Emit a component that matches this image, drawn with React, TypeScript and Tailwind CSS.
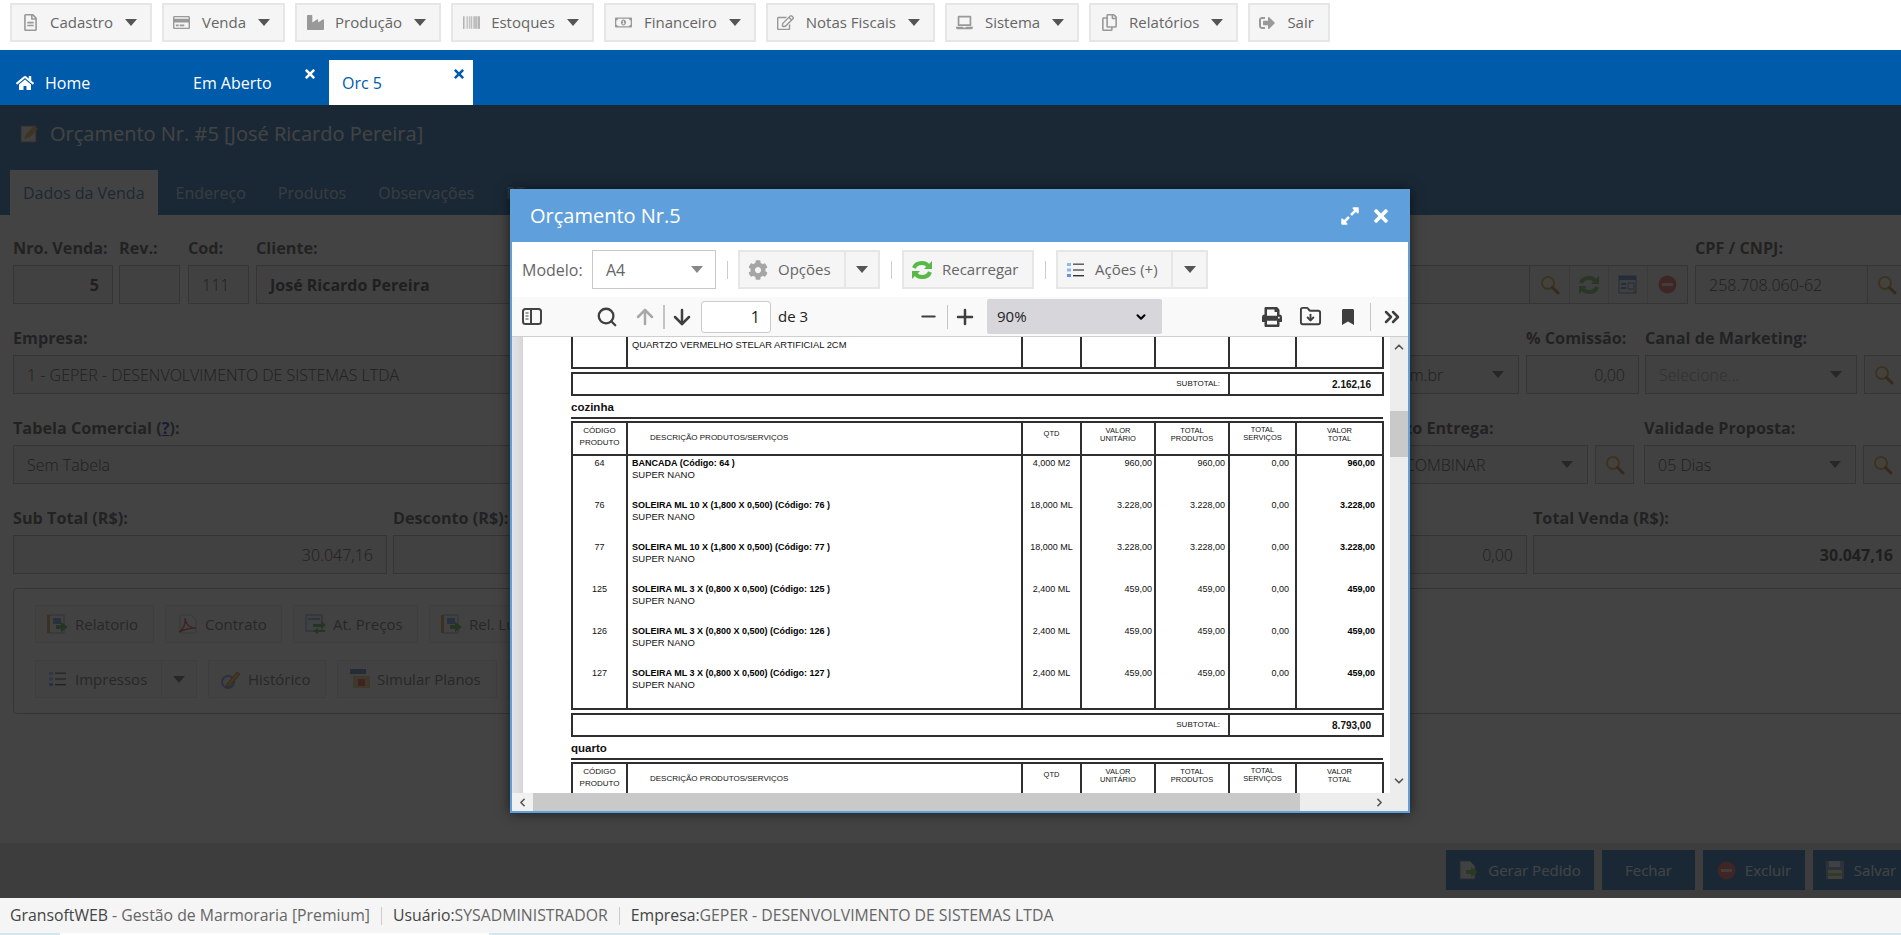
import {
  ArrowDown,
  ArrowUp,
  ChevronDown,
  ChevronLeft,
  ChevronRight,
  ChevronUp,
  ChevronsRight,
  FolderDown,
  Minus,
  Plus,
  Search,
} from "lucide-react";
import {
  FaBarcode,
  FaBookmark,
  FaCog,
  FaExpandAlt,
  FaHome,
  FaIndustry,
  FaLaptop,
  FaPrint,
  FaRegCopy,
  FaRegCreditCard,
  FaRegEdit,
  FaRegFileAlt,
  FaRegMoneyBillAlt,
  FaSignOutAlt,
  FaTimes,
} from "react-icons/fa";

type IconType = React.ElementType;

function Caret({ className = "text-[#555]" }: { className?: string }) {
  return (
    <svg width="12" height="7" viewBox="0 0 12 7" className={"shrink-0 " + className}>
      <path d="M0 0h12L6 7z" fill="currentColor" />
    </svg>
  );
}

/* old colour icons of the app */
function IconSearchOld() {
  return (
    <svg width="20" height="20" viewBox="0 0 20 20">
      <circle cx="8" cy="8" r="6" fill="#fff6d8" stroke="#d9962c" strokeWidth="2" />
      <path d="M12.5 12.5L18 18" stroke="#a8641c" strokeWidth="3" strokeLinecap="round" />
    </svg>
  );
}

function IconRefresh() {
  return (
    <svg width="22" height="20" viewBox="0 0 22 20" fill="none" stroke="#58b947" strokeWidth="4">
      <path d="M3 8c1-3 4-5 8-5 3 0 5 1 6 3" />
      <path d="M13 9l8 0 0-8z" fill="#58b947" stroke="none" />
      <path d="M19 12c-1 3-4 5-8 5-3 0-5-1-6-3" />
      <path d="M9 11l-8 0 0 8z" fill="#58b947" stroke="none" />
    </svg>
  );
}

function IconList() {
  return (
    <svg width="17" height="16" viewBox="0 0 17 16">
      <rect x="0" y="1" width="4" height="3" fill="#8cb8ee" />
      <rect x="0" y="6.5" width="4" height="3" fill="#8cb8ee" />
      <rect x="0" y="12" width="4" height="3" fill="#5f95e0" />
      <rect x="6" y="1.5" width="11" height="1.4" fill="#555" />
      <rect x="6" y="7.3" width="11" height="1.4" fill="#555" />
      <rect x="6" y="13" width="11" height="1.4" fill="#333" />
    </svg>
  );
}

function IconDocArrow() {
  return (
    <svg width="21" height="20" viewBox="0 0 21 20">
      <rect x="2" y="1" width="15" height="18" fill="#f4f4f4" stroke="#8a9bb0" />
      <rect x="0" y="1" width="3" height="18" fill="#d98a3c" />
      <rect x="6" y="4" width="8" height="6" fill="#5c8fd0" />
      <path d="M9 11h5V8l7 5-7 5v-3H9z" fill="#46a83a" />
    </svg>
  );
}

function IconPdf() {
  return (
    <svg width="20" height="20" viewBox="0 0 20 20" fill="none">
      <path d="M2 1h11l5 5v13H2z" fill="#fafafa" stroke="#bbb" />
      <path
        d="M1 18c4-2 7-8 6-14 0 5 4 10 11 10-5 0-11 1-17 4z"
        stroke="#e23b2e"
        strokeWidth="1.4"
      />
    </svg>
  );
}

function IconPrices() {
  return (
    <svg width="21" height="20" viewBox="0 0 21 20">
      <rect x="1" y="1" width="16" height="16" fill="#e6eefa" stroke="#5c7fbf" />
      <rect x="3" y="4" width="12" height="2" fill="#7fa3da" />
      <path d="M8 10h8V7l5 4-5 4v-2H8z" fill="#46a83a" />
      <path d="M20 16h-7v-2l-5 3 5 3v-2h7z" fill="#46a83a" />
    </svg>
  );
}

function IconPencil() {
  return (
    <svg width="21" height="21" viewBox="0 0 21 21" fill="none">
      <circle cx="8" cy="13" r="6" stroke="#5f95e0" strokeWidth="2" />
      <path d="M7 15L17 3l3 2-10 12-4 1z" fill="#eeb53c" stroke="#a86f1c" />
    </svg>
  );
}

function IconPlans() {
  return (
    <svg width="20" height="20" viewBox="0 0 20 20">
      <rect x="0" y="0" width="16" height="5" fill="#3f6fb0" />
      <rect x="0" y="5" width="16" height="6" fill="#f1f1f1" />
      <rect x="3" y="7" width="17" height="12" fill="#e9c36a" />
      <rect x="8" y="10" width="7" height="7" fill="#e23b2e" />
    </svg>
  );
}

function IconNoEntry() {
  return (
    <svg width="19" height="19" viewBox="0 0 19 19">
      <circle cx="9.5" cy="9.5" r="9" fill="#e2473a" />
      <rect x="4" y="8" width="11" height="3" fill="#f6d6d2" />
    </svg>
  );
}

function IconForm() {
  return (
    <svg width="20" height="20" viewBox="0 0 20 20">
      <rect x="1" y="1" width="17" height="17" fill="#dce8f8" stroke="#4a76b8" />
      <rect x="1" y="1" width="17" height="4" fill="#4a76b8" />
      <rect x="3" y="8" width="5" height="2" fill="#4a76b8" />
      <rect x="3" y="12" width="5" height="2" fill="#4a76b8" />
      <rect x="10" y="8" width="6" height="6" fill="none" stroke="#4a76b8" />
      <circle cx="17" cy="17" r="2" fill="#d9962c" />
    </svg>
  );
}

function IconGerar() {
  return (
    <svg width="20" height="20" viewBox="0 0 20 20">
      <path d="M1 1h10l5 5v13H1z" fill="#f2f2f2" stroke="#4a76b8" />
      <path d="M7 10h5V7l7 5-7 5v-3H7z" fill="#58c43e" />
    </svg>
  );
}

function IconFloppy() {
  return (
    <svg width="20" height="20" viewBox="0 0 20 20">
      <rect x="0.5" y="0.5" width="19" height="19" rx="1" fill="#6f8fd0" stroke="#2b4f9c" />
      <rect x="4" y="1" width="11" height="6" fill="#e8eef8" />
      <rect x="3" y="10" width="14" height="9" fill="#f1f5d0" />
      <rect x="3" y="13" width="14" height="3" fill="#9cc45c" />
    </svg>
  );
}

function IconEditOld() {
  return (
    <svg width="20" height="20" viewBox="0 0 20 20">
      <rect x="1" y="2" width="15" height="16" fill="#eee" stroke="#777" />
      <path d="M4 15l2-5 8-8 4 3-8 8z" fill="#e0a030" />
    </svg>
  );
}

/* top menu */
const menu: { label: string; icon: IconType }[] = [
  { label: "Cadastro", icon: FaRegFileAlt },
  { label: "Venda", icon: FaRegCreditCard },
  { label: "Produção", icon: FaIndustry },
  { label: "Estoques", icon: FaBarcode },
  { label: "Financeiro", icon: FaRegMoneyBillAlt },
  { label: "Notas Fiscais", icon: FaRegEdit },
  { label: "Sistema", icon: FaLaptop },
  { label: "Relatórios", icon: FaRegCopy },
];

function MenuButton({ label, icon: Icon }: { label: string; icon: IconType }) {
  return (
    <button className="flex h-[39px] items-center border-2 border-[#e6e6e6] bg-[#f5f5f5] pl-[9px] pr-[13px] text-[15px] text-[#666]">
      <span className="mr-[11px] flex w-[18px] justify-center text-[#999]">
        <Icon size={17} />
      </span>
      {label}
      <Caret className="ml-[12px] text-[#555]" />
    </button>
  );
}

/* behind the modal */
function Label({ children }: { children: React.ReactNode }) {
  return <div className="mb-[7px] h-[20px] whitespace-nowrap text-[16.2px] font-bold leading-[21px] text-[#333]">{children}</div>;
}

function Input({
  children,
  className = "",
}: {
  children?: React.ReactNode;
  className?: string;
}) {
  return (
    <div className={"flex h-[39px] items-center whitespace-nowrap border border-[#aaa] bg-[#eee] px-[13px] text-[16px] font-light text-[#222] " + className}>
      {children}
    </div>
  );
}

function SelectBox({ children, className = "" }: { children?: React.ReactNode; className?: string }) {
  return (
    <Input className={"justify-between " + className}>
      <span>{children}</span>
      <Caret className="mr-[1px] text-[#555]" />
    </Input>
  );
}

function LookupBtn() {
  return (
    <div className="flex h-[39px] w-[39px] shrink-0 items-center justify-center border border-[#aaa] bg-[#eee]">
      <IconSearchOld />
    </div>
  );
}

function ActionBtn({
  icon,
  label,
  className = "",
  split,
}: {
  icon: React.ReactNode;
  label: string;
  className?: string;
  split?: boolean;
}) {
  return (
    <div className={"flex h-[38px] shrink-0 items-center border border-[#ddd] bg-[#f5f5f5] text-[15px] text-[#555] " + className}>
      <span className="ml-[11px] mr-[7px] flex w-[21px] justify-center">{icon}</span>
      <span className="whitespace-nowrap">{label}</span>
      {split && (
        <span className="ml-auto flex h-full w-[35px] items-center justify-center border-l border-[#ddd]">
          <Caret />
        </span>
      )}
    </div>
  );
}

function BlueBtn({ children, className = "" }: { children: React.ReactNode; className?: string }) {
  return (
    <div className={"flex h-[40px] shrink-0 items-center justify-center gap-[9px] bg-[#005bab] text-[15px] text-white " + className}>
      {children}
    </div>
  );
}

/* pdf */
const pdfCols = "grid grid-cols-[53px_395px_59px_74px_74px_67px_87px]";

type PdfRow = {
  code: string;
  title: string;
  qty: string;
  unit: string;
  prod: string;
  serv: string;
  total: string;
};

const cozinha: PdfRow[] = [
  { code: "64", title: "BANCADA (Código: 64 )", qty: "4,000 M2", unit: "960,00", prod: "960,00", serv: "0,00", total: "960,00" },
  { code: "76", title: "SOLEIRA ML 10 X (1,800 X 0,500) (Código: 76 )", qty: "18,000 ML", unit: "3.228,00", prod: "3.228,00", serv: "0,00", total: "3.228,00" },
  { code: "77", title: "SOLEIRA ML 10 X (1,800 X 0,500) (Código: 77 )", qty: "18,000 ML", unit: "3.228,00", prod: "3.228,00", serv: "0,00", total: "3.228,00" },
  { code: "125", title: "SOLEIRA ML 3 X (0,800 X 0,500) (Código: 125 )", qty: "2,400 ML", unit: "459,00", prod: "459,00", serv: "0,00", total: "459,00" },
  { code: "126", title: "SOLEIRA ML 3 X (0,800 X 0,500) (Código: 126 )", qty: "2,400 ML", unit: "459,00", prod: "459,00", serv: "0,00", total: "459,00" },
  { code: "127", title: "SOLEIRA ML 3 X (0,800 X 0,500) (Código: 127 )", qty: "2,400 ML", unit: "459,00", prod: "459,00", serv: "0,00", total: "459,00" },
];

function PdfHeader() {
  const small = "flex flex-col items-center border-l-2 border-[#2f2f2f] pt-[4px] text-[7.5px] leading-[8px]";
  return (
    <div className={pdfCols + " h-[31px] text-[#111]"}>
      <div className="flex flex-col items-center pt-[2px] text-[8px] leading-[12px]">
        <span>CÓDIGO</span>
        <span>PRODUTO</span>
      </div>
      <div className="border-l-2 border-[#2f2f2f] pl-[22px] pt-[10px] text-[8px] leading-[10px]">DESCRIÇÃO PRODUTOS/SERVIÇOS</div>
      <div className="flex justify-center border-l-2 border-[#2f2f2f] pt-[7px] text-[7.5px] leading-[8px]">QTD</div>
      <div className={small}>
        <span>VALOR</span>
        <span>UNITÁRIO</span>
      </div>
      <div className={small}>
        <span>TOTAL</span>
        <span>PRODUTOS</span>
      </div>
      <div className={small + " !pt-[3px]"}>
        <span>TOTAL</span>
        <span>SERVIÇOS</span>
      </div>
      <div className={small}>
        <span>VALOR</span>
        <span>TOTAL</span>
      </div>
    </div>
  );
}

function PdfItem({ row }: { row: PdfRow }) {
  const cell = "border-l-2 border-[#2f2f2f] pt-[1px]";
  return (
    <div className={pdfCols + " h-[42px] text-[9px] leading-[12px] text-[#111]"}>
      <div className="pt-[1px] text-center">{row.code}</div>
      <div className={cell + " pl-[1px]"}>
        <div className="pl-[3px] font-bold text-black">{row.title}</div>
        <div className="pl-[3px] text-[9.5px]">SUPER NANO</div>
      </div>
      <div className={cell + " text-center"}>{row.qty}</div>
      <div className={cell + " pr-[2px] text-right"}>{row.unit}</div>
      <div className={cell + " pr-[3px] text-right"}>{row.prod}</div>
      <div className={cell + " pr-[6px] text-right"}>{row.serv}</div>
      <div className={cell + " pr-[7px] text-right font-bold text-black"}>{row.total}</div>
    </div>
  );
}

function Subtotal({ value }: { value: string }) {
  return (
    <div className="mt-[3px] flex h-[24px] w-[813px] border-2 border-[#2f2f2f]">
      <div className="flex w-[655px] items-center justify-end pr-[8px] text-[8px] text-[#111]">SUBTOTAL:</div>
      <div className="flex flex-1 items-center justify-end border-l-2 border-[#2f2f2f] pr-[11px] text-[10px] font-bold text-[#111]">{value}</div>
    </div>
  );
}

function SectionTitle({ children }: { children: string }) {
  return (
    <>
      <div className="h-[21px] pt-[4px] text-[11.5px] font-bold leading-[14px] text-[#111]">{children}</div>
      <div className="h-[2px] w-[812px] bg-[#2f2f2f]" />
    </>
  );
}

function PdfPage() {
  return (
    <div className="ml-[48px] w-[813px] font-['Liberation_Sans',Arial,sans-serif]">
      {/* end of the previous group */}
      <div className={pdfCols + " h-[32px] w-[813px] border-x-2 border-b-2 border-[#2f2f2f]"}>
        <div />
        <div className="border-l-2 border-[#2f2f2f] pl-[4px] pt-[2px] text-[9.4px] leading-[12px] text-[#111]">QUARTZO VERMELHO STELAR ARTIFICIAL 2CM</div>
        <div className="border-l-2 border-[#2f2f2f]" />
        <div className="border-l-2 border-[#2f2f2f]" />
        <div className="border-l-2 border-[#2f2f2f]" />
        <div className="border-l-2 border-[#2f2f2f]" />
        <div className="border-l-2 border-[#2f2f2f]" />
      </div>
      <Subtotal value="2.162,16" />
      <SectionTitle>cozinha</SectionTitle>

      <div className="mt-[2px] w-[813px] border-2 border-[#2f2f2f]">
        <PdfHeader />
        <div className="h-[2px] bg-[#2f2f2f]" />
        {cozinha.map((row) => (
          <PdfItem key={row.code} row={row} />
        ))}
      </div>
      <Subtotal value="8.793,00" />
      <SectionTitle>quarto</SectionTitle>

      <div className="mt-[2px] w-[813px] border-2 border-[#2f2f2f]">
        <PdfHeader />
      </div>
    </div>
  );
}

function ToolSep() {
  return <div className="ml-[11px] mr-[10px] h-[18px] w-px bg-[#ccc]" />;
}

function PdfViewer() {
  return (
    <div className="flex min-h-0 flex-1">
      <div className="flex min-w-0 flex-1 flex-col">
        <div className="flex min-h-0 flex-1 overflow-hidden bg-white">
          <div className="w-[11px] shrink-0 bg-gradient-to-r from-[#e4e4e6] to-[#d6d6d8]" />
          <PdfPage />
        </div>
        <div className="flex h-[18px] shrink-0 items-center bg-[#ededed] text-[#555]">
          <span className="flex h-full w-[21px] items-center justify-center bg-[#f1f1f1]">
            <ChevronLeft size={13} strokeWidth={3} />
          </span>
          <div className="h-full w-[767px] bg-[#c9c9c9]" />
          <span className="ml-auto flex h-full w-[21px] items-center justify-center">
            <ChevronRight size={13} strokeWidth={3} />
          </span>
        </div>
      </div>
      <div className="flex w-[18px] shrink-0 flex-col bg-[#ededed] text-[#555]">
        <span className="flex h-[20px] items-center justify-center">
          <ChevronUp size={14} strokeWidth={3} />
        </span>
        <div className="mt-[54px] h-[46px] bg-[#c9c9c9]" />
        <span className="mt-[314px] flex h-[20px] items-center justify-center">
          <ChevronDown size={14} strokeWidth={3} />
        </span>
      </div>
    </div>
  );
}

function Modal() {
  return (
    <div className="absolute left-[510px] top-[84px] flex h-[624px] w-[900px] flex-col border-x-2 border-b-2 border-[#5fa0dc] bg-white shadow-[0_0_12px_rgba(0,0,0,0.6)]">
      <div className="-mx-[2px] flex h-[53px] shrink-0 items-center bg-[#5fa0dc] pl-[20px] pr-[19px] pt-[1px] text-white">
        <span className="text-[20px]">Orçamento Nr.5</span>
        <FaExpandAlt size={20} className="ml-auto" />
        <FaTimes size={20} className="ml-[11px]" />
      </div>

      <div className="flex h-[55px] shrink-0 items-center pl-[10px] text-[15px] text-[#666]">
        <span className="w-[70px] text-[16px]">Modelo:</span>
        <div className="flex h-[39px] w-[124px] items-center justify-between border border-[#c8c8c8] pl-[13px] pr-[12px] text-[16px]">
          A4
          <Caret className="text-[#888]" />
        </div>
        <ToolSep />
        <div className="flex h-[39px] w-[142px] items-center border-2 border-[#e6e6e6] bg-[#f5f5f5]">
          <FaCog size={20} className="ml-[8px] text-[#a5a5a5]" />
          <span className="ml-[10px]">Opções</span>
          <span className="ml-auto flex h-full w-[34px] items-center justify-center border-l-2 border-[#e6e6e6]">
            <Caret />
          </span>
        </div>
        <ToolSep />
        <div className="flex h-[39px] w-[132px] items-center border-2 border-[#e6e6e6] bg-[#f5f5f5]">
          <span className="ml-[7px]">
            <IconRefresh />
          </span>
          <span className="ml-[9px]">Recarregar</span>
        </div>
        <ToolSep />
        <div className="flex h-[39px] w-[152px] items-center border-2 border-[#e6e6e6] bg-[#f5f5f5]">
          <span className="ml-[9px]">
            <IconList />
          </span>
          <span className="ml-[11px]">Ações (+)</span>
          <span className="ml-auto flex h-full w-[35px] items-center justify-center border-l-2 border-[#e6e6e6]">
            <Caret />
          </span>
        </div>
      </div>

      {/* pdf.js toolbar */}
      <div className="flex h-[40px] shrink-0 items-center border-b border-[#cfcfcf] bg-[#f9f9fa] text-[#3f3f3f]">
        <svg width="20" height="17" viewBox="0 0 20 17" fill="none" className="ml-[10px] shrink-0">
          <rect x="1" y="1" width="18" height="15" rx="2.5" stroke="#444" strokeWidth="2" />
          <path d="M9 1v15" stroke="#444" strokeWidth="2" />
          <path d="M3.5 5h3M3.5 8h3M3.5 11h3" stroke="#444" />
        </svg>
        <Search size={22} strokeWidth={2.5} className="ml-[54px] shrink-0" />
        <ArrowUp size={24} strokeWidth={2.5} className="ml-[15px] shrink-0 text-[#a8a8a8]" />
        <div className="ml-[6px] h-[24px] w-[2px] bg-[#c4c4c4]" />
        <ArrowDown size={24} strokeWidth={2.5} className="ml-[5px] shrink-0" />
        <div className="ml-[7px] flex h-[32px] w-[70px] shrink-0 items-center justify-end rounded-[3px] border border-[#ccc] bg-white pr-[10px] text-[16px] text-[#222]">
          1
        </div>
        <span className="ml-[7px] w-[30px] shrink-0 whitespace-nowrap text-[15px] text-[#222]">de 3</span>
        <Minus size={21} strokeWidth={2.5} className="ml-[110px] shrink-0" />
        <div className="ml-[8px] h-[24px] w-px bg-[#c4c4c4]" />
        <Plus size={24} strokeWidth={2.5} className="ml-[5px] shrink-0" />
        <div className="ml-[10px] flex h-[35px] w-[175px] shrink-0 items-center justify-between rounded-[2px] bg-[#d7d7db] pl-[10px] pr-[14px] text-[15px] text-[#222]">
          90%
          <ChevronDown size={14} strokeWidth={3.5} className="text-black" />
        </div>
        <FaPrint size={20} className="ml-[100px] shrink-0" />
        <FolderDown size={23} strokeWidth={2} className="ml-[17px] shrink-0" />
        <FaBookmark size={16} className="ml-[18px] shrink-0" />
        <div className="ml-[14px] h-[28px] w-px bg-[#c4c4c4]" />
        <ChevronsRight size={24} strokeWidth={2.5} className="ml-[9px] shrink-0" />
      </div>

      <PdfViewer />
    </div>
  );
}

export default function App() {
  return (
    <div className="flex h-[935px] w-full flex-col overflow-hidden bg-white font-['Open_Sans',sans-serif]">
      {/* Menu */}
      <div className="flex h-[50px] shrink-0 gap-[10px] pl-[10px] pt-[3px]">
        {menu.map((m) => (
          <MenuButton key={m.label} label={m.label} icon={m.icon} />
        ))}
        <button className="flex h-[39px] items-center border-2 border-[#e6e6e6] bg-[#f5f5f5] pl-[9px] pr-[14px] text-[15px] text-[#666]">
          <FaSignOutAlt size={16} className="mr-[12px] text-[#999]" />
          Sair
        </button>
      </div>

      {/* Tabs */}
      <div className="flex h-[55px] shrink-0 items-end bg-[#005bab] text-[16px]">
        <div className="flex h-[45px] w-[180px] items-center pl-[16px] text-white">
          <FaHome size={18} className="mr-[11px]" />
          Home
        </div>
        <div className="relative flex h-[45px] w-[149px] items-center pl-[13px] text-white">
          Em Aberto
          <FaTimes size={14} className="absolute right-[12px] top-[7px]" />
        </div>
        <div className="relative flex h-[45px] w-[144px] items-center bg-white pl-[13px] text-[#005bab]">
          Orc 5
          <FaTimes size={14} className="absolute right-[7px] top-[7px]" />
        </div>
      </div>

      {/* Page under the modal */}
      <div className="relative flex min-h-0 flex-1 flex-col overflow-hidden bg-white">
        <div className="flex h-[110px] shrink-0 flex-col bg-[#005bab]">
          <div className="flex h-[56px] items-center pl-[20px] pt-[1px] text-[20px] text-white">
            <span className="mr-[10px]">
              <IconEditOld />
            </span>
            Orçamento Nr. #5 [José Ricardo Pereira]
          </div>
          <div className="ml-[10px] mt-[9px] flex h-[45px] items-center gap-[32px] text-[16px] text-[#c3d2e0]">
            <div className="flex h-full items-center bg-white px-[13px] text-[#005bab]">Dados da Venda</div>
            <span className="-ml-[14px]">Endereço</span>
            <span>Produtos</span>
            <span>Observações</span>
            <span>RT</span>
          </div>
        </div>

        <div className="flex w-[1907px] flex-1 flex-col pl-[13px] pt-[23px]">
          {/* Row 1 */}
          <div className="flex">
            <div className="mr-[6px] w-[100px]">
              <Label>Nro. Venda:</Label>
              <Input className="justify-end !font-bold">5</Input>
            </div>
            <div className="mr-[8px] w-[61px]">
              <Label>Rev.:</Label>
              <Input />
            </div>
            <div className="mr-[7px] w-[61px]">
              <Label>Cod:</Label>
              <Input>111</Input>
            </div>
            <div className="mr-[7px] w-[1432px]">
              <Label>Cliente:</Label>
              <div className="flex h-[39px] items-center border border-[#aaa] bg-[#eee]">
                <span className="flex-1 pl-[13px] text-[16px] font-bold text-[#222]">José Ricardo Pereira</span>
                <span className="flex h-full w-[40px] items-center justify-center border-l border-[#aaa]">
                  <IconSearchOld />
                </span>
                <span className="flex h-full w-[39px] items-center justify-center border-l border-[#ccc]">
                  <IconRefresh />
                </span>
                <span className="flex h-full w-[39px] items-center justify-center border-l border-[#ccc]">
                  <IconForm />
                </span>
                <span className="flex h-full w-[40px] items-center justify-center border-l border-[#ccc]">
                  <IconNoEntry />
                </span>
              </div>
            </div>
            <div className="w-[212px]">
              <Label>CPF / CNPJ:</Label>
              <div className="flex h-[39px] items-center border border-[#aaa] bg-[#eee] text-[16px] font-light text-[#222]">
                <span className="flex-1 pl-[13px]">258.708.060-62</span>
                <span className="flex h-full w-[39px] items-center justify-center border-l border-[#aaa]">
                  <IconSearchOld />
                </span>
              </div>
            </div>
          </div>

          {/* Row 2 */}
          <div className="mt-[24px] flex">
            <div className="mr-[7px] w-[1230px]">
              <Label>Empresa:</Label>
              <Input>1 - GEPER - DESENVOLVIMENTO DE SISTEMAS LTDA</Input>
            </div>
            <div className="mr-[7px] w-[269px]">
              <Label>Vendedor:</Label>
              <SelectBox>vendas@gransoft.com.br</SelectBox>
            </div>
            <div className="mr-[6px] w-[113px]">
              <Label>% Comissão:</Label>
              <Input className="justify-end">0,00</Input>
            </div>
            <div className="mr-[7px] w-[212px]">
              <Label>Canal de Marketing:</Label>
              <SelectBox className="!text-[#888]">Selecione...</SelectBox>
            </div>
            <div className="pt-[27px]">
              <LookupBtn />
            </div>
          </div>

          {/* Row 3 */}
          <div className="mt-[24px] flex">
            <div className="mr-[7px] w-[1357px]">
              <Label>
                Tabela Comercial (<span className="text-[#0000c8] underline">?</span>):
              </Label>
              <Input>Sem Tabela</Input>
            </div>
            <div className="mr-[7px] w-[211px]">
              <Label>Prazo Entrega:</Label>
              <SelectBox>A COMBINAR</SelectBox>
            </div>
            <div className="mr-[10px] pt-[27px]">
              <LookupBtn />
            </div>
            <div className="mr-[7px] w-[212px]">
              <Label>Validade Proposta:</Label>
              <SelectBox>05 Dias</SelectBox>
            </div>
            <div className="pt-[27px]">
              <LookupBtn />
            </div>
          </div>

          {/* Row 4 */}
          <div className="mt-[24px] flex gap-[6px]">
            <div className="flex-1">
              <Label>Sub Total (R$):</Label>
              <Input className="justify-end">30.047,16</Input>
            </div>
            <div className="flex-1">
              <Label>Desconto (R$):</Label>
              <Input className="justify-end">0,00</Input>
            </div>
            <div className="flex-1">
              <Label>Frete (R$):</Label>
              <Input className="justify-end">0,00</Input>
            </div>
            <div className="flex-1">
              <Label>Outros (R$):</Label>
              <Input className="justify-end">0,00</Input>
            </div>
            <div className="flex-1">
              <Label>Total Venda (R$):</Label>
              <Input className="justify-end !font-bold">30.047,16</Input>
            </div>
          </div>

          {/* Buttons */}
          <div className="mt-[14px] h-[126px] rounded-[4px] border border-[#aaa] pl-[21px] pt-[16px]">
            <div className="flex gap-[11px]">
              <ActionBtn icon={<IconDocArrow />} label="Relatorio" className="w-[119px]" />
              <ActionBtn icon={<IconPdf />} label="Contrato" className="w-[117px]" />
              <ActionBtn icon={<IconPrices />} label="At. Preços" className="w-[125px]" />
              <ActionBtn icon={<IconDocArrow />} label="Rel. Lucro" className="w-[125px]" />
            </div>
            <div className="mt-[17px] flex gap-[11px]">
              <ActionBtn icon={<IconList />} label="Impressos" className="w-[162px]" split />
              <ActionBtn icon={<IconPencil />} label="Histórico" className="w-[118px]" />
              <ActionBtn icon={<IconPlans />} label="Simular Planos" className="w-[160px]" />
              <ActionBtn icon={<IconDocArrow />} label="Anexos" className="w-[110px]" />
            </div>
          </div>
        </div>

        {/* Action bar */}
        <div className="flex h-[55px] w-[1940px] shrink-0 items-start gap-[8px] bg-[#dadada] pl-[1446px] pt-[7px]">
          <BlueBtn className="w-[148px]">
            <IconGerar />
            Gerar Pedido
          </BlueBtn>
          <BlueBtn className="w-[93px]">Fechar</BlueBtn>
          <BlueBtn className="w-[102px]">
            <IconNoEntry />
            Excluir
          </BlueBtn>
          <BlueBtn className="w-[95px]">
            <IconFloppy />
            Salvar
          </BlueBtn>
        </div>

        {/* Modal backdrop */}
        <div className="absolute inset-0 bg-[#1f1f1fd6]" />
        <Modal />
      </div>

      {/* Status bar */}
      <div className="flex h-[35px] shrink-0 items-center bg-[#f5f5f5] pl-[10px] text-[15.8px] text-[#666]">
        <span className="text-[#444]">GransoftWEB</span>
        <span>&nbsp;- Gestão de Marmoraria [Premium]</span>
        <div className="mx-[11px] h-[18px] w-px bg-[#ccc]" />
        <span className="text-[#444]">Usuário:</span>
        <span>SYSADMINISTRADOR</span>
        <div className="mx-[11px] h-[18px] w-px bg-[#ccc]" />
        <span className="text-[#444]">Empresa:</span>
        <span>GEPER - DESENVOLVIMENTO DE SISTEMAS LTDA</span>
      </div>
      <div className="flex h-[2px] shrink-0 bg-[#d3e8ec]">
        <div className="ml-[60px] w-[429px] bg-white" />
      </div>
    </div>
  );
}
